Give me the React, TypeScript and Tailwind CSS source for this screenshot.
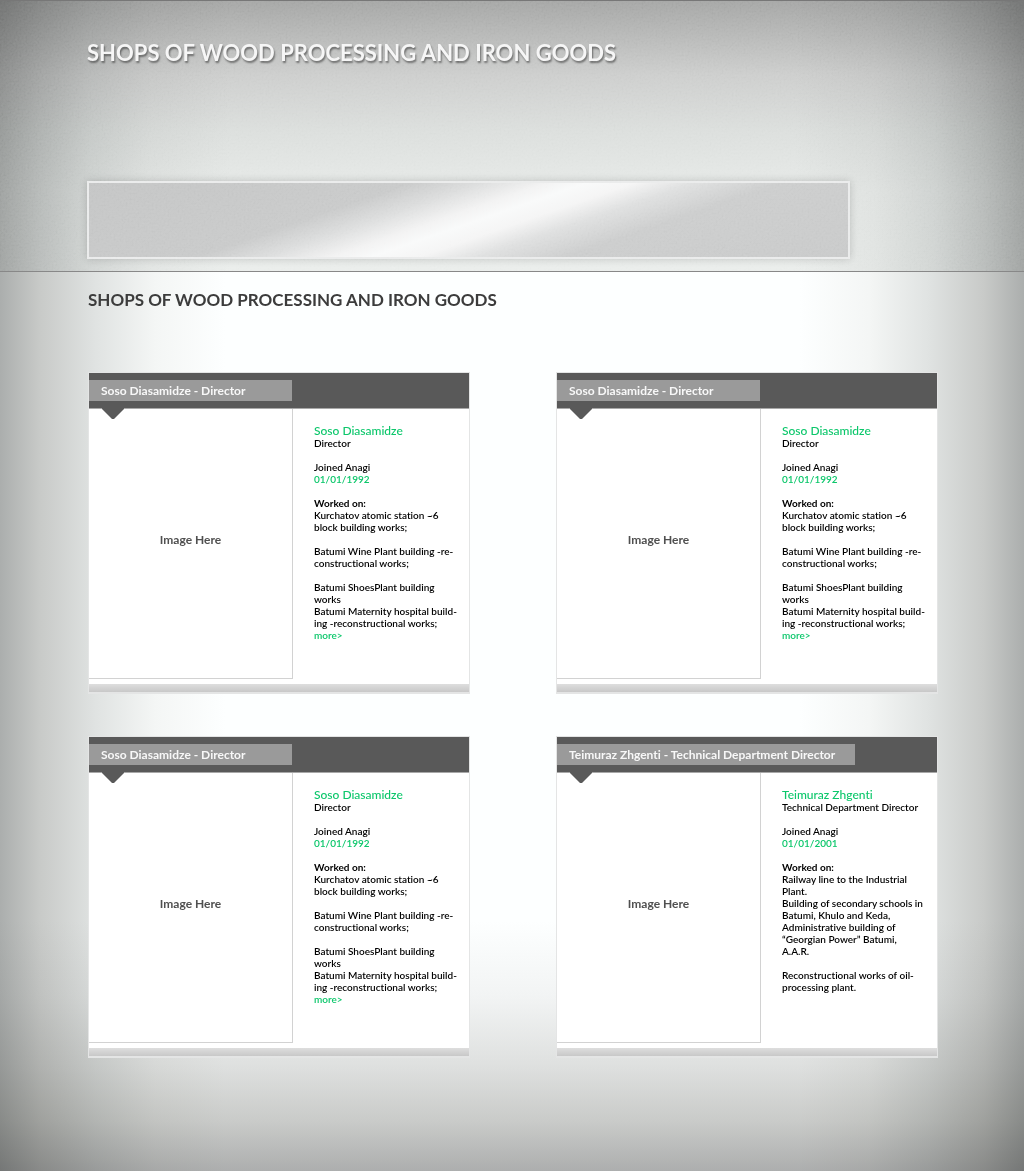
type Person = {
  name: string;
  role: string;
  joined: string;
  works: string[][];
  more: boolean;
};

const soso: Person = {
  name: "Soso Diasamidze",
  role: "Director",
  joined: "01/01/1992",
  works: [
    ["Kurchatov atomic station ~6", "block building works;"],
    ["Batumi Wine Plant building -re-", "constructional works;"],
    ["Batumi ShoesPlant building", "works", "Batumi Maternity hospital build-", "ing -reconstructional works;"],
  ],
  more: true,
};

const teimuraz: Person = {
  name: "Teimuraz Zhgenti",
  role: "Technical Department Director",
  joined: "01/01/2001",
  works: [
    [
      "Railway line to the Industrial",
      "Plant.",
      "Building of secondary schools in",
      "Batumi, Khulo and Keda,",
      "Administrative building of",
      "“Georgian Power” Batumi,",
      "A.A.R.",
    ],
    ["Reconstructional works of oil-", "processing plant."],
  ],
  more: false,
};

const people: Person[] = [soso, soso, soso, teimuraz];

function PersonCard({ person }: { person: Person }) {
  return (
    <article className="flex min-h-[322px] flex-col border border-b-2 border-[#e4e5e5] bg-white">
      <header className="flex h-9 items-center border-b border-[#a8a8a8] bg-[#595959]">
        <h3 className="h-[21px] min-w-[203px] bg-[#9a9a9a] pr-5 pl-3 text-[12px] leading-[21px] font-bold whitespace-nowrap text-[#f8f8f8]">
          {person.name} - {person.role}
        </h3>
      </header>
      <div className="flex flex-1 items-stretch pb-[5px]">
        <div className="relative flex w-[204px] shrink-0 items-center justify-center border-r border-b border-[#d2d2d2] pb-2 text-[12px] font-bold text-[#505050]">
          <svg className="absolute -top-px left-[13px]" width="22" height="12" viewBox="0 0 22 12" aria-hidden="true">
            <path d="M0 0H22V1L12 11H10L0 1Z" fill="#595959" />
          </svg>
          Image Here
        </div>
        <div className="pt-[15px] pl-[21px] text-[10px] leading-3 font-semibold whitespace-nowrap text-black">
          <p className="text-[12px] leading-[13px] font-medium text-[#0cc76b]">{person.name}</p>
          <p>{person.role}</p>
          <p className="mt-3">Joined Anagi</p>
          <p className="text-[#0cc76b]">{person.joined}</p>
          <p className="mt-3 font-bold">Worked on:</p>
          <div className="flex flex-col gap-3">
            {person.works.map((lines) => (
              <p key={lines[0]}>
                {lines.map((line) => (
                  <span key={line} className="block">
                    {line}
                  </span>
                ))}
              </p>
            ))}
          </div>
          {person.more && (
            <a href="#more" className="block text-[#0cc76b]">
              more&gt;
            </a>
          )}
        </div>
      </div>
      <div className="h-2 bg-linear-to-b from-[#dedede] to-[#c8c8c8]" />
    </article>
  );
}

export default function App() {
  return (
    <div className="min-h-screen bg-[linear-gradient(to_right,#abaead_0px,#c8cac8_40px,#e0e3e2_96px,#f4f6f5_155px,#fdffff_225px,#fdffff_calc(100%_-_225px),#f4f6f5_calc(100%_-_155px),#e0e3e2_calc(100%_-_96px),#c8cac8_calc(100%_-_40px),#abaead_100%),linear-gradient(to_top,#aeaeae_0px,#cbcbc9_50px,#e0e0df_105px,#f4f4f4_175px,#fff_250px)] bg-blend-multiply font-['Lato','Open_Sans',sans-serif] [font-variant-ligatures:none]">
      <header className="relative h-[272px] border-t border-b border-t-[#777] border-b-[#888] bg-[linear-gradient(to_right,#b2b3b3_0px,#cccdcd_40px,#e5e6e6_90px,#f6f6f6_150px,#fff_230px,#fff_calc(100%_-_230px),#f6f6f6_calc(100%_-_150px),#e5e6e6_calc(100%_-_90px),#cccdcd_calc(100%_-_40px),#b2b3b3_100%),linear-gradient(to_bottom,#a9aaa9_0px,#bbbcbb_36px,#cfd0cf_75px,#dde0de_130px,#e8ebe9_190px,#ebeeec_100%)] bg-blend-multiply">
        <svg className="pointer-events-none absolute inset-0 size-full opacity-10 mix-blend-soft-light" aria-hidden="true">
          <filter id="grain" colorInterpolationFilters="sRGB">
            <feTurbulence type="fractalNoise" baseFrequency="0.5" numOctaves="2" stitchTiles="stitch" />
            <feColorMatrix values="0.8 0.8 0.8 0 -0.7  0.8 0.8 0.8 0 -0.7  0.8 0.8 0.8 0 -0.7  0 0 0 0 1" />
          </filter>
          <rect width="100%" height="100%" filter="url(#grain)" />
        </svg>
        <div className="flex h-full flex-col justify-between pt-9 pr-6 pb-3 pl-[87px]">
          <h1 className="text-[22px] leading-8 font-bold text-[#f6f6f6] [text-shadow:1px_2px_2px_rgba(0,0,0,0.45)]">
            SHOPS OF WOOD PROCESSING AND IRON GOODS
          </h1>
          <div className="h-[78px] w-full max-w-[763px] border-2 border-[#ebecec] bg-[linear-gradient(161deg,#c6c7c7_0%,#cbcccc_33%,#dddede_40%,#f3f3f3_47%,#f9fafa_51%,#f5f5f5_56%,#e0e1e1_62%,#cecfcf_71%,#cbcccc_100%)] shadow-[0_0_8px_rgba(0,0,0,0.18)]" />
        </div>
      </header>
      <main className="pr-[86px] pb-28 pl-[88px]">
        <h2 className="pt-4 text-[17px] leading-6 font-bold text-[#3c3c3c]">SHOPS OF WOOD PROCESSING AND IRON GOODS</h2>
        <div className="mt-[60px] grid grid-cols-1 gap-x-[86px] gap-y-[42px] md:grid-cols-2">
          {people.map((person, i) => (
            <PersonCard key={i} person={person} />
          ))}
        </div>
      </main>
    </div>
  );
}
